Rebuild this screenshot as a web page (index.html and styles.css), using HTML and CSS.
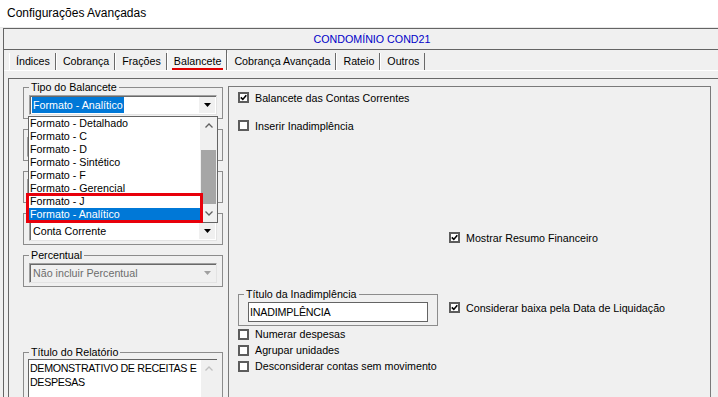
FILE: index.html
```html
<!DOCTYPE html>
<html lang="pt-BR">
<head>
  <meta charset="UTF-8">
  <title>Configurações Avançadas</title>
  <link rel="stylesheet" href="styles.css">
</head>
<body>
  <div class="titlebar">Configurações Avançadas</div>

  <div class="frame">
    <div class="header">CONDOMÍNIO COND21</div>

    <!-- Tab strip -->
    <div class="tabs">
      <span class="tab">Índices</span>
      <span class="tab">Cobrança</span>
      <span class="tab">Frações</span>
      <span class="tab active"><span class="mark">Balancete</span></span>
      <span class="tab">Cobrança Avançada</span>
      <span class="tab">Rateio</span>
      <span class="tab">Outros</span>
    </div>

    <div class="page">
      <!-- Left column: group boxes -->
      <div class="left">
        <fieldset class="gb">
          <legend>Tipo do Balancete</legend>
          <div class="combo">
            <span class="val"><span class="sel">Formato - Analítico</span></span>
            <span class="btn"><svg width="7" height="4" viewBox="0 0 7 4"><polygon points="0,0 7,0 3.5,4" fill="#000"/></svg></span>
          </div>
        </fieldset>

        <!-- these boxes sit under the open list, their captions are hidden -->
        <fieldset class="gb">
          <legend>&nbsp;</legend>
          <div class="combo wide disabled">
            <span class="val"></span>
            <span class="btn"></span>
          </div>
        </fieldset>

        <fieldset class="gb">
          <legend>&nbsp;</legend>
          <div class="combo wide disabled">
            <span class="val"></span>
            <span class="btn"></span>
          </div>
        </fieldset>

        <fieldset class="gb">
          <legend>&nbsp;</legend>
          <div class="combo">
            <span class="val">Conta Corrente</span>
            <span class="btn"><svg width="7" height="4" viewBox="0 0 7 4"><polygon points="0,0 7,0 3.5,4" fill="#000"/></svg></span>
          </div>
        </fieldset>

        <fieldset class="gb">
          <legend>Percentual</legend>
          <div class="combo disabled">
            <span class="val">Não incluir Percentual</span>
            <span class="btn"><svg width="7" height="4" viewBox="0 0 7 4"><polygon points="0,0 7,0 3.5,4" fill="#a0a0a0"/></svg></span>
          </div>
        </fieldset>

        <fieldset class="gb report">
          <legend>Título do Relatório</legend>
          <div class="memo">
            <div class="memo-text">DEMONSTRATIVO DE RECEITAS E DESPESAS</div>
            <div class="memo-scroll">
              <svg width="8" height="5" viewBox="0 0 8 5"><polyline points="0.5,4.5 4,1 7.5,4.5" fill="none" stroke="#c0c0c0" stroke-width="1.3"/></svg>
            </div>
          </div>
        </fieldset>

        <!-- Open dropdown of "Tipo do Balancete" -->
        <div class="droplist">
          <div class="dl-items">
            <div class="dl-item">Formato - Detalhado</div>
            <div class="dl-item">Formato - C</div>
            <div class="dl-item">Formato - D</div>
            <div class="dl-item">Formato - Sintético</div>
            <div class="dl-item">Formato - F</div>
            <div class="dl-item">Formato - Gerencial</div>
            <div class="dl-item">Formato - J</div>
            <div class="dl-item hl">Formato - Analítico</div>
          </div>
          <div class="dl-scroll">
            <div class="sb-btn"><svg width="8" height="5" viewBox="0 0 8 5"><polyline points="0.5,4.5 4,1 7.5,4.5" fill="none" stroke="#606060" stroke-width="1.3"/></svg></div>
            <div class="sb-track"><div class="sb-thumb"></div></div>
            <div class="sb-btn"><svg width="8" height="5" viewBox="0 0 8 5"><polyline points="0.5,0.5 4,4 7.5,0.5" fill="none" stroke="#606060" stroke-width="1.3"/></svg></div>
          </div>
        </div>

        <!-- red highlight annotation -->
        <div class="redbox"></div>
      </div>

      <!-- Right panel: options -->
      <div class="right">
        <div class="chk-row">
          <span class="box"><svg width="7" height="7" viewBox="0 0 7 7"><polyline points="0.8,3.4 2.8,5.4 6.3,1.2" fill="none" stroke="#000" stroke-width="1.6"/></svg></span>
          Balancete das Contas Correntes
        </div>
        <div class="chk-row r2">
          <span class="box"></span>
          Inserir Inadimplência
        </div>
        <div class="chk-row r3">
          <span class="box"><svg width="7" height="7" viewBox="0 0 7 7"><polyline points="0.8,3.4 2.8,5.4 6.3,1.2" fill="none" stroke="#000" stroke-width="1.6"/></svg></span>
          Mostrar Resumo Financeiro
        </div>

        <div class="split">
          <fieldset class="gb inad">
            <legend>Título da Inadimplência</legend>
            <div class="edit">INADIMPLÊNCIA</div>
          </fieldset>
          <div class="chk-row r4">
            <span class="box"><svg width="7" height="7" viewBox="0 0 7 7"><polyline points="0.8,3.4 2.8,5.4 6.3,1.2" fill="none" stroke="#000" stroke-width="1.6"/></svg></span>
            Considerar baixa pela Data de Liquidação
          </div>
        </div>

        <div class="chk-row tight"><span class="box"></span>Numerar despesas</div>
        <div class="chk-row tight"><span class="box"></span>Agrupar unidades</div>
        <div class="chk-row tight"><span class="box"></span>Desconsiderar contas sem movimento</div>
      </div>
    </div>
  </div>
</body>
</html>
```

FILE: styles.css
```css
/* Reset */
* {
  box-sizing: border-box;
  margin: 0;
  padding: 0;
}
body {
  font-family: "Liberation Sans", Arial, sans-serif;
  font-size: 10.7px;
  color: #000;
  background: #f0f0f0;
  width: 718px;
  height: 397px;
  overflow: hidden;
}

/* Window title */
.titlebar {
  height: 28px;
  background: #fff;
  border-bottom: 1px solid #e8e8e8;
  padding: 6px 0 0 7px;
  font-size: 12px;
  line-height: 15px;
}

/* Main frame */
.frame {
  margin-left: 3px;
  border-left: 1px solid #646464;
  border-top: 1px solid #646464;
  height: 369px;
}
.header {
  height: 21px;
  border-bottom: 1px solid #646464;
  text-align: center;
  padding-left: 22px;
  line-height: 20px;
  color: #0000c8;
}

/* Tabs */
.tabs {
  display: flex;
  align-items: flex-end;
  height: 21px;
  padding-left: 5px;
  border-bottom: 1px solid #fff;
}
.tab {
  height: 17px;
  line-height: 17px;
  padding: 0 5px 0 6px;
  border-left: 1px solid #fff;
  border-right: 1px solid #696969;
}
.tab.active {
  height: 20px;
  padding-top: 3px;
  background: #f4f4f4;
}
.mark {
  display: inline-block;
  line-height: 14px;
  padding: 0 2px;
  margin: 0 -2px;
  border-bottom: 2px solid #e00000;
}

/* Tab page */
.page {
  display: flex;
  margin: 7px 0 0 4px;
  border-left: 1px solid #696969;
  border-top: 1px solid #696969;
  height: 320px;
}

/* Left column */
.left {
  position: relative;
  width: 219px;
  padding: 2px 0 0 14px;
}
.gb {
  width: 200px;
  border: 1px solid #8c8c8c;
  padding: 1px 5px 3px 4px;
  margin-bottom: 4px;
}
.gb legend {
  line-height: 13px;
  padding: 0 2px;
  margin-left: 1px;
}
.gb.report {
  margin-top: 59px;
  padding-top: 0;
  height: 80px;
}

/* Combo boxes */
.combo {
  display: flex;
  align-items: center;
  height: 20px;
  margin-left: 1px;
  background: #fff;
  border: 1px solid;
  border-color: #a0a0a0 #e3e3e3 #e3e3e3 #a0a0a0;
  box-shadow: inset 1px 1px 0 #696969;
}
.combo.wide {
  margin-left: -1px;
}
.combo .val {
  flex: 1;
  padding-left: 3px;
  line-height: 16px;
  white-space: nowrap;
}
.combo .sel {
  display: inline-block;
  background: #0078d7;
  color: #fff;
  padding: 0 1px;
  margin-left: -1px;
}
.combo .btn {
  display: flex;
  align-items: center;
  justify-content: center;
  width: 16px;
  height: 16px;
  margin-right: 1px;
  background: #f0f0f0;
}
.combo.disabled {
  background: #f0f0f0;
  color: #6d6d6d;
}

/* Multi-line text box */
.memo {
  display: flex;
  height: 60px;
}
.memo-text {
  width: 173px;
  background: #fff;
  border-top: 1px solid #646464;
  border-left: 1px solid #646464;
  padding: 2px 0 0 1px;
  line-height: 13.5px;
  letter-spacing: -0.35px;
}
.memo-scroll {
  flex: 1;
  display: flex;
  justify-content: center;
  padding-top: 6px;
  border-top: 1px solid #646464;
}

/* Opened dropdown list */
.droplist {
  position: absolute;
  left: 19px;
  top: 37px;
  width: 190px;
  height: 107px;
  display: flex;
  background: #fff;
  border: 1px solid #646464;
}
.dl-items {
  flex: 1;
}
.dl-item {
  height: 13px;
  line-height: 13px;
  padding-left: 1px;
  white-space: nowrap;
}
.dl-item.hl {
  background: #0078d7;
  color: #fff;
}
.dl-scroll {
  width: 17px;
  display: flex;
  flex-direction: column;
  background: #f0f0f0;
}
.sb-btn {
  height: 17px;
  display: flex;
  align-items: center;
  justify-content: center;
}
.sb-track {
  flex: 1;
  padding: 16px 1px 1px;
}
.sb-thumb {
  height: 100%;
  background: #a6a6a6;
}
.redbox {
  position: absolute;
  left: 17px;
  top: 114px;
  width: 177px;
  height: 30px;
  border: 3px solid #e8000b;
}

/* Right panel */
.right {
  width: 483px;
  margin-top: 7px;
  border: 1px solid #7a7a7a;
  border-bottom: none;
  padding: 3px 0 0 9px;
}
.chk-row {
  display: flex;
  align-items: center;
  height: 15px;
  white-space: nowrap;
}
.chk-row.r2 {
  margin-top: 13px;
}
.chk-row.r3 {
  margin-top: 97px;
  margin-left: 211px;
}
.chk-row.r4 {
  margin: 12px 0 0 11px;
}
.chk-row.tight {
  height: 16px;
}
.box {
  display: flex;
  align-items: center;
  justify-content: center;
  width: 11px;
  height: 11px;
  margin-right: 6px;
  background: #fff;
  border: 2px solid #5c5c5c;
}
.split {
  display: flex;
  align-items: flex-start;
  margin-top: 43px;
}
.gb.inad {
  margin-bottom: 0;
  padding-right: 9px;
}
.edit {
  height: 20px;
  margin-left: 5px;
  background: #fff;
  border: 1px solid #646464;
  padding-left: 1px;
  line-height: 18px;
  letter-spacing: -0.2px;
}
```
